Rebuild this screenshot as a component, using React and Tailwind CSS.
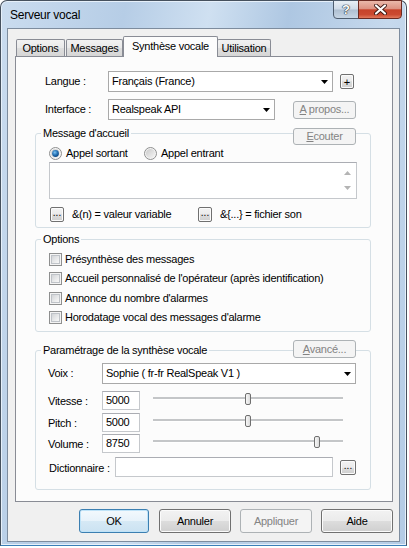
import React from "react";

const txt = "text-[11px] tracking-[-0.25px] leading-[13px] text-black";

function Btn({ children, className = "", disabled = false, def = false }) {
  let look =
    "border-[#707070] bg-[linear-gradient(180deg,#f2f2f2_0%,#ebebeb_50%,#dddddd_50%,#cfcfcf_100%)] shadow-[inset_0_0_0_1px_#fbfbfb] text-black";
  if (disabled) look = "border-[#adb2b5] bg-[#f4f4f4] text-[#838383]";
  if (def)
    look =
      "border-[#3c7fb1] bg-[linear-gradient(180deg,#f3f9fd_0%,#e7f2fa_50%,#d6e9f5_50%,#cbe2f2_100%)] shadow-[inset_0_0_0_1px_#bfe3f8] text-black";
  return (
    <div
      className={`flex shrink-0 items-center justify-center rounded-[3px] border text-[11px] leading-[13px] tracking-[-0.25px] ${look} ${className}`}
    >
      {children}
    </div>
  );
}

function SmallBtn({ children, className = "" }) {
  return (
    <div
      className={`flex shrink-0 items-center justify-center rounded-[2px] border border-[#707070] bg-[linear-gradient(180deg,#f2f2f2_0%,#ebebeb_50%,#dddddd_50%,#cfcfcf_100%)] shadow-[inset_0_0_0_1px_#fbfbfb] text-[10px] leading-[10px] text-black ${className}`}
    >
      {children}
    </div>
  );
}

function Arrow() {
  return (
    <svg width="7" height="4" viewBox="0 0 7 4" className="shrink-0">
      <path d="M0 0H7L3.5 4Z" fill="#000" />
    </svg>
  );
}

function Combo({ className, value }) {
  return (
    <div
      className={`flex h-[21px] shrink-0 items-center border border-[#a9a9a9] bg-white pl-[3px] pr-[4px] ${className}`}
    >
      <span className={`flex-1 truncate ${txt}`}>{value}</span>
      <Arrow />
    </div>
  );
}

function Field({ className, value = "" }) {
  return (
    <div
      className={`flex shrink-0 items-center border border-[#c5c8cc] border-t-[#abadb3] bg-white pl-[3px] ${className}`}
    >
      <span className={txt}>{value}</span>
    </div>
  );
}

function Radio({ checked }) {
  const id = checked ? "r1" : "r0";
  return (
    <svg width="13" height="13" viewBox="0 0 13 13" className="shrink-0">
      <defs>
        <linearGradient id={id + "b"} x1="0" y1="0" x2="1" y2="1">
          <stop offset="0" stopColor="#c9c9c9" />
          <stop offset="1" stopColor="#f6f6f6" />
        </linearGradient>
        <radialGradient id={id + "d"} cx="0.4" cy="0.35" r="0.65">
          <stop offset="0" stopColor="#7cc3f2" />
          <stop offset="0.55" stopColor="#2a76b8" />
          <stop offset="1" stopColor="#0d4a86" />
        </radialGradient>
      </defs>
      <circle cx="6.5" cy="6.5" r="6" fill="#f4f4f4" stroke="#8e8f8f" />
      <circle cx="6.5" cy="6.5" r="4.6" fill={`url(#${id}b)`} />
      {checked && <circle cx="6.5" cy="6.5" r="3.4" fill={`url(#${id}d)`} />}
    </svg>
  );
}

function Check() {
  return (
    <div className="flex h-[13px] w-[13px] shrink-0 items-center justify-center border border-[#8e8f8f] bg-[#f4f4f4]">
      <div className="h-[9px] w-[9px] border border-[#bfc3c8] bg-[linear-gradient(135deg,#d3d5d8_0%,#eaebec_60%,#f8f8f8_100%)]" />
    </div>
  );
}

function Group({ title, className = "", children, button }) {
  return (
    <div
      className={`relative shrink-0 rounded-[3px] border border-[#d5dfe5] ${className}`}
    >
      <span
        className={`absolute left-[5px] top-[-8px] bg-[#fcfcfc] px-[2px] ${txt} leading-[14px]`}
      >
        {title}
      </span>
      {button}
      {children}
    </div>
  );
}

function Slider({ pct }) {
  const left = pct * (190 - 6);
  return (
    <div className="relative ml-[13px] h-[19px] w-[190px] shrink-0">
      <div className="absolute left-0 right-0 top-[6px] h-[2px] bg-[#c4c6c8] shadow-[0_1px_0_#ffffff]" />
      <div
        className="absolute top-[2px] h-[12px] w-[6px] rounded-[2px] border border-[#6f6f6f] bg-[linear-gradient(90deg,#f7f7f7,#dcdcdc)]"
        style={{ left: `${left}px` }}
      />
    </div>
  );
}

function SliderRow({ label, value, pct, className = "" }) {
  return (
    <div className={`flex h-[19px] items-start pl-[12px] ${className}`}>
      <span className={`w-[54px] shrink-0 pt-[4px] ${txt}`}>{label}</span>
      <Field className="h-[19px] w-[38px]" value={value} />
      <Slider pct={pct} />
    </div>
  );
}

function Tab({ children, className = "" }) {
  return (
    <div
      className={`flex h-[17px] shrink-0 items-center justify-center rounded-t-[2px] border border-b-0 border-[#898c95] bg-[linear-gradient(180deg,#f2f2f2_0%,#e9e9e9_50%,#dedede_51%,#d6d6d6_100%)] ${txt} ${className}`}
    >
      {children}
    </div>
  );
}

export default function App() {
  return (
    <div className="h-[548px] w-[409px] bg-white font-['Liberation_Sans',Arial,sans-serif]">
      <div className="flex h-[546px] w-[407px] flex-col rounded-t-[7px] border border-[#46515e] border-b-[#3a7fb8] bg-[linear-gradient(100deg,#cadcef_0%,#b6cde6_25%,#cfe0f1_42%,#aec7e2_58%,#c6d9ed_78%,#b3cbe5_100%)] px-[6px] pb-[3px] shadow-[inset_0_0_0_1px_#e6f0fa]">
        {/* Title bar */}
        <div className="flex h-[27px] shrink-0 items-start justify-between">
          <span className="ml-[3px] mt-[7px] text-[12px] leading-[14px] tracking-[-0.25px] text-black">
            Serveur vocal
          </span>
          <div className="-mt-px mr-[-2px] flex">
            <div className="flex h-[19px] w-[26px] items-center justify-center rounded-bl-[4px] border border-[#4f5e70] bg-[linear-gradient(180deg,#e8eff6_0%,#cfdbe8_48%,#aebfd1_52%,#c7d6e5_100%)] text-[13px] font-bold leading-none text-white [text-shadow:0_0_1px_#1e2a36,0_0_1px_#1e2a36,0_0_1px_#1e2a36]">
              ?
            </div>
            <div className="-ml-px flex h-[19px] w-[44px] items-center justify-center rounded-br-[4px] border border-[#6b2a22] bg-[linear-gradient(180deg,#eab8aa_0%,#dc9282_45%,#c7432b_52%,#cb4a31_80%,#e27a5e_100%)]">
              <svg width="13" height="11" viewBox="0 0 13 11">
                <path
                  d="M2 1.5L11 9.5M11 1.5L2 9.5"
                  stroke="#3a1510"
                  strokeWidth="3.8"
                  strokeLinecap="round"
                />
                <path
                  d="M2 1.5L11 9.5M11 1.5L2 9.5"
                  stroke="#ffffff"
                  strokeWidth="2.2"
                  strokeLinecap="round"
                />
              </svg>
            </div>
          </div>
        </div>

        {/* Client area */}
        <div className="flex h-[514px] w-[393px] shrink-0 flex-col border border-[#7d8c9e] bg-[#f0f0f0] pl-[7px] pr-[6px] pt-[7px]">
          {/* Tabs */}
          <div className="flex h-[20px] shrink-0 items-end">
            <Tab className="ml-[1px] w-[49px]">Options</Tab>
            <Tab className="ml-[1px] w-[57px]">Messages</Tab>
            <div
              className={`relative z-10 -mb-px flex h-[21px] w-[95px] shrink-0 items-center justify-center rounded-t-[2px] border border-b-0 border-[#898c95] bg-[#fcfcfc] pb-[2px] ${txt}`}
            >
              Synthèse vocale
            </div>
            <Tab className="-ml-px w-[54px]">Utilisation</Tab>
          </div>

          {/* Panel */}
          <div className="flex h-[446px] w-[378px] shrink-0 flex-col border border-[#898c95] bg-[#fcfcfc] pl-[19px] pr-[21px]">
            {/* Langue */}
            <div className="mt-[14px] flex h-[21px] items-center pl-[10px]">
              <span className={`w-[63px] shrink-0 ${txt}`}>Langue :</span>
              <Combo className="w-[225px]" value="Français (France)" />
              <SmallBtn className="ml-[7px] h-[15px] w-[14px] text-[11px]">
                +
              </SmallBtn>
            </div>
            {/* Interface */}
            <div className="mt-[7px] flex h-[21px] items-center pl-[10px]">
              <span className={`w-[63px] shrink-0 ${txt}`}>Interface :</span>
              <Combo className="w-[167px]" value="Realspeak API" />
              <Btn disabled className="ml-[18px] h-[18px] w-[63px]">
                <span>
                  <span className="underline">A</span> propos...
                </span>
              </Btn>
            </div>

            {/* Message d'accueil */}
            <Group
              title="Message d'accueil"
              className="mt-[13px] h-[95px]"
              button={
                <Btn
                  disabled
                  className="absolute right-[14px] top-[-6px] h-[17px] w-[63px]"
                >
                  <span>
                    <span className="underline">E</span>couter
                  </span>
                </Btn>
              }
            >
              <div className="mt-[12px] flex h-[14px] items-center pl-[13px]">
                <div className="flex w-[95px] shrink-0 items-center">
                  <Radio checked />
                  <span className={`ml-[4px] ${txt}`}>Appel sortant</span>
                </div>
                <div className="flex items-center">
                  <Radio />
                  <span className={`ml-[4px] ${txt}`}>Appel entrant</span>
                </div>
              </div>
              <div className="ml-[13px] mt-[2px] flex h-[37px] w-[308px] border border-[#c5c8cc] border-t-[#abadb3] bg-white">
                <div className="flex-1" />
                <div className="flex w-[17px] flex-col items-center justify-between py-[8px]">
                  <svg width="7" height="4" viewBox="0 0 7 4">
                    <path d="M0 4H7L3.5 0Z" fill="#b4b4b4" />
                  </svg>
                  <svg width="7" height="4" viewBox="0 0 7 4">
                    <path d="M0 0H7L3.5 4Z" fill="#b4b4b4" />
                  </svg>
                </div>
              </div>
              <div className="mt-[8px] flex h-[15px] items-center pl-[14px]">
                <div className="flex w-[148px] shrink-0 items-center">
                  <SmallBtn className="h-[15px] w-[14px] items-end pb-[3px]">
                    ...
                  </SmallBtn>
                  <span className={`ml-[8px] ${txt}`}>
                    &amp;(n) = valeur variable
                  </span>
                </div>
                <div className="flex items-center">
                  <SmallBtn className="h-[15px] w-[14px] items-end pb-[3px]">
                    ...
                  </SmallBtn>
                  <span className={`ml-[8px] ${txt}`}>
                    &amp;{"{...}"} = fichier son
                  </span>
                </div>
              </div>
            </Group>

            {/* Options */}
            <Group title="Options" className="mt-[11px] h-[93px]">
              <div className="flex flex-col pl-[13px] pt-[9.5px]">
                {[
                  "Présynthèse des messages",
                  "Accueil personnalisé de l'opérateur (après identification)",
                  "Annonce du nombre d'alarmes",
                  "Horodatage vocal des messages d'alarme",
                ].map((t) => (
                  <div key={t} className="flex h-[19.5px] items-center">
                    <Check />
                    <span className={`ml-[3px] ${txt}`}>{t}</span>
                  </div>
                ))}
              </div>
            </Group>

            {/* Paramétrage */}
            <Group
              title="Paramétrage de la synthèse vocale"
              className="mt-[18px] h-[140px]"
              button={
                <Btn
                  disabled
                  className="absolute right-[14px] top-[-11px] h-[18px] w-[63px]"
                >
                  <span>
                    <span className="underline">A</span>vancé...
                  </span>
                </Btn>
              }
            >
              <div className="mt-[12px] flex h-[21px] items-center pl-[12px]">
                <span className={`w-[54px] shrink-0 ${txt}`}>Voix :</span>
                <Combo className="w-[254px]" value="Sophie ( fr-fr RealSpeak V1 )" />
              </div>
              <SliderRow className="mt-[7px]" label="Vitesse :" value="5000" pct={0.5} />
              <SliderRow className="mt-[2.5px]" label="Pitch :" value="5000" pct={0.5} />
              <SliderRow className="mt-[2.5px]" label="Volume :" value="8750" pct={0.875} />
              <div className="mt-[4px] flex h-[20px] items-center pl-[12px]">
                <span className={`w-[67px] shrink-0 pl-[1px] pt-[2px] ${txt}`}>
                  Dictionnaire :
                </span>
                <Field className="h-[20px] w-[218px]" />
                <SmallBtn className="ml-[7px] h-[15px] w-[16px] items-end pb-[3px]">
                  ...
                </SmallBtn>
              </div>
            </Group>
          </div>

          {/* Bottom buttons */}
          <div className="mt-[7px] flex h-[24px] w-[378px] justify-end">
            <Btn def className="h-[24px] w-[70px]">OK</Btn>
            <Btn className="ml-[10px] h-[24px] w-[72px]">Annuler</Btn>
            <Btn disabled className="ml-[9px] h-[24px] w-[72px]">Appliquer</Btn>
            <Btn className="ml-[9px] h-[24px] w-[72px]">Aide</Btn>
          </div>
        </div>
      </div>
    </div>
  );
}
